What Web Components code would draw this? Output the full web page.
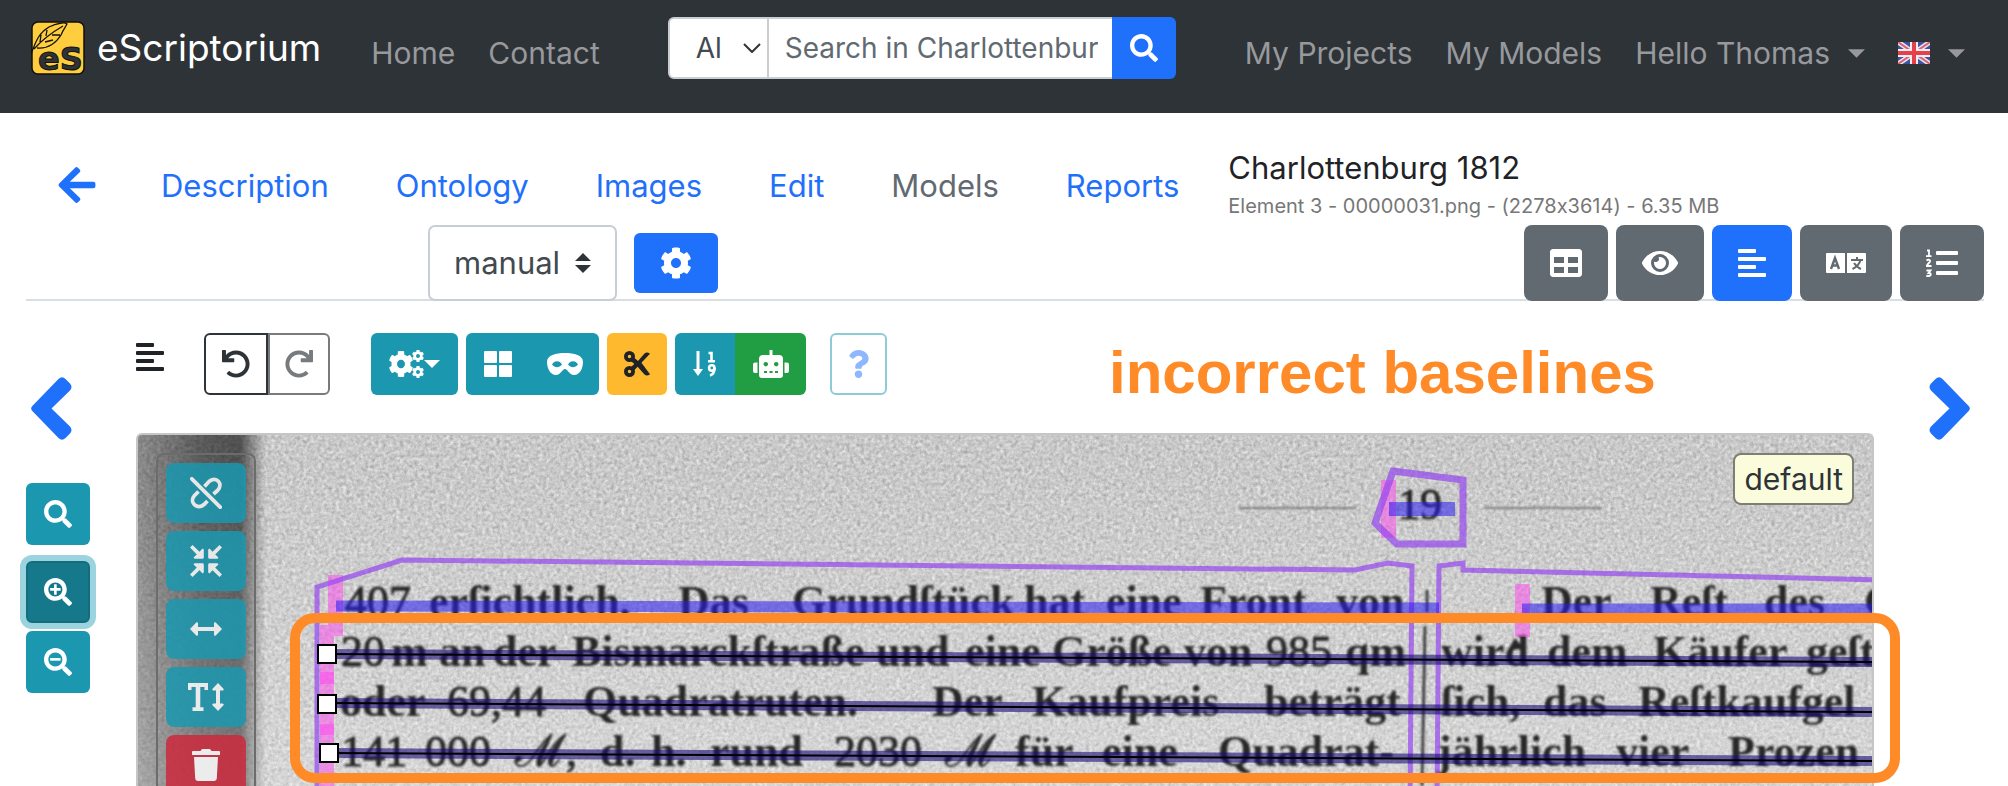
<!DOCTYPE html>
<html lang="en">
<head>
<meta charset="utf-8">
<title>eScriptorium</title>
<style>
  html, body { margin: 0; }
  body { background: #fff; color: #1f2327; font-family: Inter, "Open Sans", sans-serif; font-size: 30px; line-height: 40px; }
</style>
</head>
<body>
<escr-app></escr-app>
<script>
const ICONS = {
  search: ['0 0 512 512', '<path d="M505 442.7L405.3 343c-4.5-4.5-10.6-7-17-7H372c27.6-35.3 44-79.7 44-128C416 93.1 322.9 0 208 0S0 93.1 0 208s93.1 208 208 208c48.3 0 92.7-16.4 128-44v16.3c0 6.4 2.5 12.5 7 17l99.7 99.7c9.4 9.4 24.6 9.4 33.9 0l28.3-28.3c9.4-9.4 9.4-24.6.1-34zM208 336c-70.7 0-128-57.2-128-128 0-70.7 57.2-128 128-128 70.7 0 128 57.2 128 128 0 70.7-57.2 128-128 128z"/>'],
  left: ['0 0 41 63', '<path d="M1.300 29L27.500 2Q31 -1.500 34.500 2L39 6.500Q42 10 39 13.500L20.500 31.500L39 49.500Q42 53 39 56.500L34.500 61Q31 64.500 27.500 61L1.300 34Q-1 31.500 1.300 29z"/>'],
  back: ['0 37 448 438', '<path d="M257.5 445.1l-22.2 22.2c-9.4 9.4-24.6 9.4-33.9 0L7 273c-9.4-9.4-9.4-24.6 0-33.9L201.4 44.7c9.4-9.4 24.6-9.4 33.9 0l22.2 22.2c9.5 9.5 9.3 25-.4 34.3L136.6 216H424c13.3 0 24 10.7 24 24v32c0 13.3-10.7 24-24 24H136.6l120.5 114.8c9.8 9.3 10 24.8.4 34.3z"/>'],
  cog: ['0 0 512 512', '<path d="M487.4 315.7l-42.6-24.6c4.3-23.2 4.3-47 0-70.2l42.6-24.6c4.9-2.8 7.1-8.6 5.5-14-11.1-35.6-30-67.8-54.7-94.6-3.8-4.1-10-5.1-14.8-2.3L380.8 110c-17.9-15.4-38.5-27.3-60.8-35.1V25.8c0-5.6-3.9-10.5-9.4-11.7-36.7-8.2-74.3-7.8-109.2 0-5.5 1.2-9.4 6.1-9.4 11.7V75c-22.2 7.9-42.8 19.8-60.8 35.1L88.7 85.5c-4.9-2.8-11-1.9-14.8 2.3-24.7 26.7-43.6 58.9-54.7 94.6-1.7 5.4.6 11.2 5.5 14L67.3 221c-4.3 23.2-4.3 47 0 70.2l-42.6 24.6c-4.9 2.8-7.1 8.6-5.5 14 11.1 35.6 30 67.8 54.7 94.6 3.8 4.1 10 5.1 14.8 2.3l42.6-24.6c17.9 15.4 38.5 27.3 60.8 35.1v49.2c0 5.6 3.9 10.5 9.4 11.7 36.7 8.2 74.3 7.8 109.2 0 5.5-1.2 9.4-6.1 9.4-11.7v-49.2c22.2-7.9 42.8-19.8 60.8-35.1l42.6 24.6c4.9 2.8 11 1.9 14.8-2.3 24.7-26.7 43.6-58.9 54.7-94.6 1.5-5.5-.7-11.3-5.6-14.1zM256 336c-44.1 0-80-35.9-80-80s35.9-80 80-80 80 35.9 80 80-35.9 80-80 80z"/>'],
  undo: ['0 0 512 512', '<path d="M212.333 224.333H12c-6.627 0-12-5.373-12-12V12C0 5.373 5.373 0 12 0h48c6.627 0 12 5.373 12 12v78.112C117.773 39.279 184.26 7.47 258.175 8.007c136.906.994 246.448 111.623 246.157 248.532C504.041 393.258 393.12 504 256.333 504c-64.089 0-122.496-24.313-166.51-64.215-5.099-4.622-5.334-12.554-.467-17.42l33.967-33.967c4.474-4.474 11.662-4.717 16.401-.525C170.76 415.336 211.58 432 256.333 432c97.268 0 176-78.716 176-176 0-97.267-78.716-176-176-176-58.496 0-110.28 28.476-142.274 72.333h98.274c6.627 0 12 5.373 12 12v48c0 6.627-5.373 12-12 12z"/>'],
  table: ['0 0 512 512', '<path d="M464 32H48C21.49 32 0 53.49 0 80v352c0 26.51 21.49 48 48 48h416c26.51 0 48-21.49 48-48V80c0-26.51-21.49-48-48-48zM224 416H64v-96h160v96zm0-160H64v-96h160v96zm224 160H288v-96h160v96zm0-160H288v-96h160v96z"/>'],
  eye: ['0 0 576 512', '<path d="M572.52 241.4C518.29 135.59 410.93 64 288 64S57.68 135.64 3.48 241.41a32.35 32.35 0 0 0 0 29.19C57.71 376.41 165.07 448 288 448s230.32-71.64 284.52-177.41a32.35 32.35 0 0 0 0-29.19zM288 400a144 144 0 1 1 144-144 143.93 143.93 0 0 1-144 144zm0-240a95.31 95.31 0 0 0-25.31 3.79 47.85 47.85 0 0 1-66.9 66.9A95.78 95.78 0 1 0 288 160z"/>'],
  question: ['0 0 384 512', '<path d="M202.021 0C122.202 0 70.503 32.703 29.914 91.026c-7.363 10.58-5.093 25.086 5.178 32.874l43.138 32.709c10.373 7.865 25.132 6.026 33.253-4.148 25.049-31.381 43.63-49.449 82.757-49.449 30.764 0 68.816 19.799 68.816 49.631 0 22.552-18.617 34.134-48.993 51.164-35.423 19.86-82.299 44.576-82.299 106.405V320c0 13.255 10.745 24 24 24h72.471c13.255 0 24-10.745 24-24v-5.773c0-42.86 125.268-44.645 125.268-160.627C377.504 66.256 286.902 0 202.021 0zM192 373.459c-38.196 0-69.271 31.075-69.271 69.271 0 38.195 31.075 69.27 69.271 69.27s69.271-31.075 69.271-69.271-31.075-69.27-69.271-69.27z"/>'],
  align: ['0 0 28 28', '<rect width="18" height="4" rx="1"/><rect y="8" width="28" height="4" rx="1"/><rect y="16" width="18" height="4" rx="1"/><rect y="24" width="28" height="4" rx="1"/>'],
  language: ['0 0 40 20', '<path d="M1 0h18v20H1a1 1 0 0 1-1-1V1a1 1 0 0 1 1-1zM21 0h18a1 1 0 0 1 1 1v18a1 1 0 0 1-1 1H21z"/><g fill="none" stroke="#626a71" stroke-width="2.4"><path d="M5 16l4-11 4 11M6.500 12.500h5"/><path d="M25 7h12M31 4v3M34.500 7c-1 4-4 7-8 9M28 10c2 3 4 5 7 6" stroke-width="2"/></g>'],
  ol: ['0 0 32 28', '<rect x="10" y="2" width="22" height="4" rx="1"/><rect x="10" y="12" width="22" height="4" rx="1"/><rect x="10" y="22" width="22" height="4" rx="1"/><g fill="none" stroke="currentColor" stroke-width="1.800"><path d="M1 1.500h2V7M0 7.200h5.500"/><path d="M.5 11.500c2-1.500 4-.5 3.500 1C3.500 14 1 15 .8 17H5.500"/><path d="M.5 21.500h4L2.500 24c3 0 3 3 0 3C1.500 27 1 27 .3 26.500"/></g>'],
  grid: ['0 0 28 26', '<rect width="13" height="12" rx="1"/><rect x="15" width="13" height="12" rx="1"/><rect y="14" width="13" height="12" rx="1"/><rect x="15" y="14" width="13" height="12" rx="1"/>'],
  mask: ['0 0 36 22', '<path fill-rule="evenodd" d="M18 0C27 0 36 2 36 9C36 15 33 22 27 22C22 22 21 16 18 16S14 22 9 22C3 22 0 15 0 9C0 2 9 0 18 0zM5 11.500C7 7 13 7 15 11.500C12 15 8 15 5 11.500zM21 11.500C23 7 29 7 31 11.500C28 15 24 15 21 11.500z"/>'],
  cut: ['0 0 26 26', '<g fill="none" stroke="currentColor" stroke-width="3.800"><circle cx="5.500" cy="5.500" r="3.600"/><circle cx="5.500" cy="20.500" r="3.600"/></g><path d="M7 10l3-3.500L14 10L20.500 2.500Q23 .4 26 2.700L10 19.500l-3-3.500L10.300 13z"/><path d="M12.500 14.500L16.500 10.500L26 23.300Q23 25.600 20.500 23.500z"/>'],
  sort: ['0 0 24 26', '<path d="M3.500 0h3v18H10L5 25L0 18h3.500z"/><g fill="none" stroke="currentColor" stroke-width="2.600"><path d="M15.500 2h3v8M15 10.300h7"/><circle cx="18.800" cy="17" r="2.700"/><path d="M21.500 17c0 4-1 6.500-4.500 7.500"/></g>'],
  robot: ['0 0 36 28', '<path fill-rule="evenodd" d="M16.500 0h3v5H26a4 4 0 0 1 4 4V25a3 3 0 0 1-3 3H9a3 3 0 0 1-3-3V9a4 4 0 0 1 4-4h6.500zM12.800 12a2.200 2.200 0 1 0 .01 0zM23.200 12a2.200 2.200 0 1 0 .01 0zM11 21v2h3v-2zm5.500 0v2h3v-2zm5.500 0v2h3v-2zM4.500 12.500v10.500H2a2 2 0 0 1-2-2V14.500a2 2 0 0 1 2-2zM31.500 12.500H34a2 2 0 0 1 2 2V21a2 2 0 0 1-2 2h-2.500z"/>'],
  unlink: ['0 0 32 32', '<g fill="none" stroke="currentColor" stroke-width="3.800"><path d="M14.500 9.500L19 4.500C26 -1.500 34 7 27.500 13.500L23.500 17"/><path d="M17.500 24L14 27.500C7 33.500 -1.500 25 4.500 18.500L8.500 14.500"/><path d="M1.800 1.800L30.200 30.200" stroke-linecap="round"/></g>'],
  compress: ['0 0 32 32', '<g id="q"><path d="M13.800 4.500V12.500a1.300 1.300 0 0 1-1.300 1.300H4.500L3.500 12.500L6.800 9.500L0 2.500L2.500 0L9.500 6.800L12.500 3.500z"/></g><use href="#q" transform="rotate(90 16 16)"/><use href="#q" transform="rotate(180 16 16)"/><use href="#q" transform="rotate(270 16 16)"/>'],
  arrows: ['0 0 32 14', '<path d="M0 7L6.500 .3Q8 -.3 8 1.500V5H24V1.500Q24 -.3 25.500 .3L32 7L25.500 13.700Q24 14.300 24 12.500V9H8V12.500Q8 14.300 6.500 13.700z"/>'],
  height: ['0 0 36 28', '<path d="M0 0H20V7H16.500V4H12.300V24.300H15.500V28H4.500V24.300H7.700V4H3.500V7H0z"/><path d="M30 0L35.700 6Q36 7.500 34.500 7.500H32V20.500H34.500Q36 20.500 35.700 22L30 28L24.300 22Q24 20.500 25.500 20.500H28V7.500H25.500Q24 7.500 24.300 6z"/>'],
  trash: ['0 0 28 32', '<path d="M1 2H8.500L10 0h8l1.500 2H27a1 1 0 0 1 1 1V6H0V3A1 1 0 0 1 1 2zM2 8H26L24.800 29.500A2.600 2.600 0 0 1 22.200 32H5.800A2.600 2.600 0 0 1 3.200 29.500z"/>'],
  caret: ['0 0 16 8', '<path d="M0 0H16L8 8z"/>'],
  flag: ['0 0 32 22', '<path fill="#3f549f" d="M0 0H32V22H0z"/><path stroke="#e6e6f2" stroke-width="5" d="M0 0L32 22M32 0L0 22"/><path stroke="#e0606c" stroke-width="2" d="M0 0L32 22M32 0L0 22"/><path stroke="#f6edf2" stroke-width="8" d="M16 0V22M0 11H32"/><path stroke="#e5414d" stroke-width="4" d="M16 0V22M0 11H32"/>'],
  logo: ['0 0 54 54', '<rect x="1" y="1" width="52" height="52" rx="6" fill="#fece3e" stroke="#14110c" stroke-width="1.500"/><path d="M0 33C4 24 6 13 18 6C26 2 34 1 36 3C34 7 32 9 30 14C25 22 17 28 6 27M3 28C10 20 20 12 32 5M9 21l1-7M15 15l1-6M14 21l8-2M21 14l8 0" fill="none" stroke="#14110c" stroke-width="1.300"/><text x="7" y="49" font-family="DejaVu Sans" font-weight="bold" font-size="32" fill="#2e3338" stroke="#14110c" stroke-width="1">eS</text>']
};
ICONS.zoomin = [ICONS.search[0], ICONS.search[1] + '<path d="M184 112h48v72h72v48h-72v72h-48v-72h-72v-48h72z"/>'];
ICONS.zoomout = [ICONS.search[0], ICONS.search[1] + '<path d="M112 184h192v48H112z"/>'];
ICONS.right = [ICONS.left[0], `<g transform="translate(41 0) scale(-1 1)">${ICONS.left[1]}</g>`];
ICONS.redo = [ICONS.undo[0], `<g transform="translate(512 0) scale(-1 1)">${ICONS.undo[1]}</g>`];
ICONS.cogs = ['0 0 35 28', `<svg y="1" width="24" height="26" viewBox="14 10 484 492" preserveAspectRatio="none">${ICONS.cog[1]}</svg><svg x="23" width="12" height="12" viewBox="14 10 484 492">${ICONS.cog[1]}</svg><svg x="23" y="16" width="12" height="12" viewBox="14 10 484 492">${ICONS.cog[1]}</svg>`];

const define = (name, css, html) => customElements.define(name, class extends HTMLElement {
  constructor() {
    super();
    this.attachShadow({ mode: 'open' }).innerHTML = `<style>*{box-sizing:border-box}${css}</style>${html}`;
  }
});

/* Icon: <escr-icon name w h> */
customElements.define('escr-icon', class extends HTMLElement {
  connectedCallback() {
    if (this.shadowRoot) return;
    const [box, body] = ICONS[this.getAttribute('name')];
    this.attachShadow({ mode: 'open' }).innerHTML =
      `<style>:host{display:inline-flex;flex:none}svg{display:block;fill:currentColor}</style>
       <svg aria-hidden="true" width="${this.getAttribute('w')}" height="${this.getAttribute('h')}" viewBox="${box}">${body}</svg>`;
  }
});

/* Button with an icon in its slot; sizes and colours arrive as custom properties. */
customElements.define('escr-button', class extends HTMLElement {
  connectedCallback() {
    if (this.shadowRoot) return;
    this.attachShadow({ mode: 'open' }).innerHTML = `<style>
      :host{display:block;flex:none}
      button{box-sizing:border-box;display:flex;align-items:center;justify-content:center;margin:0;padding:0;font:inherit;
        width:var(--w,64px);height:var(--h,62px);background:var(--bg,#1b98af);color:var(--fg,#fff);
        border:var(--bd,0);border-radius:var(--r,6px);box-shadow:var(--sh,none)}
      </style><button type="button" aria-label="${this.getAttribute('label')}"><slot></slot></button>`;
  }
});

define('escr-navbar', `
  :host{display:block;background:#2e3338;color:#97999c}
  nav{display:flex;align-items:center;padding:17px 43px 34px 31px}
  a{color:inherit;text-decoration:none}
  .brand{display:flex;align-items:center;gap:12px;color:#fff;font-size:37px;line-height:54px}
  .links{display:flex;gap:33px;padding-top:10px;white-space:nowrap}
  .main{margin-left:50px}
  .user{margin-left:auto}
  .menu{display:flex;align-items:center;gap:18px}
  form{display:flex;margin-left:68px;height:62px}
  select{appearance:none;width:101px;padding:0 0 0 26px;border:2px solid #c8ced4;border-radius:6px 0 0 6px;color:#42494f;font:inherit;font-size:28px;
    background:#fff url("data:image/svg+xml,%3Csvg xmlns='http://www.w3.org/2000/svg' width='18' height='10'%3E%3Cpath d='M1 1l8 8 8-8' fill='none' stroke='%23333' stroke-width='2'/%3E%3C/svg%3E") no-repeat right 6px center}
  input{width:345px;margin-left:-2px;padding:0 14px 0 16px;border:2px solid #c8ced4;border-right:0;border-radius:0;font:inherit;font-size:28px;background:#fff;color:#42494f}
  input::placeholder{color:#626a71;opacity:1}
`, `<nav>
  <a class="brand" href="#"><escr-icon name="logo" w="54" h="54"></escr-icon>eScriptorium</a>
  <div class="links main"><a href="#">Home</a><a href="#">Contact</a></div>
  <form><select aria-label="Scope"><option>Al</option></select><input type="text" aria-label="Search" placeholder="Search in Charlottenburg"><escr-button label="Search" style="--bg:#1f70fb;--r:0 6px 6px 0"><escr-icon name="search" w="28" h="28"></escr-icon></escr-button></form>
  <div class="links user"><a href="#">My Projects</a><a href="#">My Models</a><a class="menu" href="#">Hello Thomas <escr-icon name="caret" w="17" h="9"></escr-icon></a><a class="menu" href="#" aria-label="Language"><escr-icon name="flag" w="32" h="22"></escr-icon><escr-icon name="caret" w="17" h="9"></escr-icon></a></div>
</nav>`);

define('escr-header', `
  :host{display:block}
  .tabs{display:flex;align-items:center;height:112px;padding:34px 0 0 58px;white-space:nowrap}
  a{color:#1f70fb;text-decoration:none}
  .back{display:flex;margin-bottom:2px}
  nav{display:flex;gap:67px;margin:0 49px 0 65px;font-size:31px}
  .off{color:#626a71}
  h1{margin:0;font-size:31px;font-weight:400;line-height:40px}
  small{display:block;color:#777;font-size:20px;line-height:36px;font-feature-settings:"calt" 0}
  .bar{display:flex;align-items:center;gap:17px;height:76px;margin:0 24px 0 26px;padding-left:402px;box-shadow:inset 0 -2px #d9dee3}
  select{appearance:none;width:189px;height:76px;padding:0 0 0 24px;border:2px solid #c8ced4;border-radius:7px;color:#42494f;font:inherit;font-size:31px;
    background:#fff url("data:image/svg+xml,%3Csvg xmlns='http://www.w3.org/2000/svg' width='16' height='20'%3E%3Cpath d='M0 8L8 0l8 8zM0 12h16l-8 8z' fill='%232e3338'/%3E%3C/svg%3E") no-repeat right 24px center}
  .views{display:flex;gap:8px;margin-left:auto}
  .views escr-button{--bg:#626a71;--h:76px;--w:84px;--r:8px}
`, `<div class="tabs">
  <a class="back" href="#" aria-label="Back"><escr-icon name="back" w="38" h="36"></escr-icon></a>
  <nav><a href="#">Description</a><a href="#">Ontology</a><a href="#">Images</a><a href="#">Edit</a><a class="off" href="#">Models</a><a href="#">Reports</a></nav>
  <div><h1>Charlottenburg 1812</h1><small>Element 3 - 00000031.png - (2278x3614) - 6.35 MB</small></div>
</div>
<div class="bar">
  <select aria-label="Transcription"><option>manual</option></select>
  <escr-button label="Settings" style="--w:84px;--h:60px;--bg:#1f70fb"><escr-icon name="cog" w="32" h="32"></escr-icon></escr-button>
  <div class="views">
    <escr-button label="Metadata"><escr-icon name="table" w="32" h="32"></escr-icon></escr-button>
    <escr-button label="Source image" style="--w:88px"><escr-icon name="eye" w="36" h="32"></escr-icon></escr-button>
    <escr-button label="Segmentation" style="--w:80px;--bg:#1f70fb"><escr-icon name="align" w="28" h="28"></escr-icon></escr-button>
    <escr-button label="Transcription" style="--w:92px"><escr-icon name="language" w="40" h="20"></escr-icon></escr-button>
    <escr-button label="Text"><escr-icon name="ol" w="32" h="28"></escr-icon></escr-button>
  </div>
</div>`);

define('escr-toolbar', `
  :host{display:flex;align-items:flex-start;height:62px;margin-bottom:38px}
  .group{display:flex;margin-left:8px}
  .panel{margin-top:10px;color:#1f2327}
  .note{margin:10px 0 0 222px;color:#ff8a28;font:bold 60px/60px "Liberation Sans",sans-serif;white-space:nowrap}
`, `<escr-icon class="panel" name="align" w="28" h="28"></escr-icon>
  <div class="group" style="margin-left:40px">
    <escr-button label="Undo" style="--bg:#fff;--fg:#2e3338;--bd:2px solid #2e3338;--r:6px 0 0 6px"><escr-icon name="undo" w="28" h="28"></escr-icon></escr-button>
    <escr-button label="Redo" style="--w:62px;--bg:#fff;--fg:#777b7e;--bd:2px solid #777b7e;--r:0 6px 6px 0"><escr-icon name="redo" w="28" h="28"></escr-icon></escr-button>
  </div>
  <div class="group" style="margin-left:41px"><escr-button label="Actions" style="--w:87px"><escr-icon name="cogs" w="35" h="28"></escr-icon><escr-icon name="caret" w="16" h="8"></escr-icon></escr-button></div>
  <div class="group">
    <escr-button label="Toggle regions" style="--w:64px;--r:6px 0 0 6px"><escr-icon name="grid" w="28" h="26"></escr-icon></escr-button>
    <escr-button label="Toggle masks" style="--w:69px;--r:0 6px 6px 0"><escr-icon name="mask" w="36" h="22"></escr-icon></escr-button>
  </div>
  <div class="group"><escr-button label="Cut" style="--w:60px;--bg:#ffb92e;--fg:#1f2327"><escr-icon name="cut" w="26" h="26"></escr-icon></escr-button></div>
  <div class="group">
    <escr-button label="Reorder lines" style="--w:60px;--r:6px 0 0 6px"><escr-icon name="sort" w="24" h="26"></escr-icon></escr-button>
    <escr-button label="Automatic ordering" style="--w:71px;--bg:#219d43;--r:0 6px 6px 0"><escr-icon name="robot" w="36" h="28"></escr-icon></escr-button>
  </div>
  <div class="group" style="margin-left:24px"><escr-button label="Help" style="--w:57px;--bg:#fff;--fg:#8eb7fe;--bd:2px solid #8dcbd7"><escr-icon name="question" w="21" h="28"></escr-icon></escr-button></div>
  <div class="note">incorrect baselines</div>`);

/* Words of the scanned page: x, then text, on each baseline. */
const LINES = [
  [616, [345,'407'],[429,'erſichtlich.'],[678,'Das'],[792,'Grundſtück'],[1024,'hat'],[1106,'eine'],[1200,'Front'],[1336,'von'],[1541,'Der'],[1650,'Reſt'],[1764,'des'],[1864,'G']],
  [666, [341,'20'],[391,'m'],[439,'an'],[493,'der'],[572,'Bismarckſtraße'],[876,'und'],[965,'eine'],[1052,'Größe'],[1184,'von'],[1266,'985'],[1345,'qm'],[1441,'wird'],[1547,'dem'],[1653,'Käufer'],[1806,'geſt']],
  [716, [340,'oder'],[447,'69,44'],[583,'Quadratruten.'],[932,'Der'],[1032,'Kaufpreis'],[1264,'beträgt'],[1441,'ſich,'],[1543,'das'],[1638,'Reſtkaufgel']],
  [766, [341,'141'],[425,'000'],[515,'ℳ,'],[600,'d.'],[651,'h.'],[710,'rund'],[834,'2030'],[945,'ℳ'],[1015,'für'],[1102,'eine'],[1218,'Quadrat-'],[1437,'jährlich'],[1616,'vier'],[1728,'Prozen']]
];
const words = LINES.map(([y, ...ws]) => ws.map(([x, t]) =>
  `<text x="${x}" y="${y}"${/^[\dℳ]/.test(t) ? ' class="n"' : ''}>${t}</text>`).join('')).join('');

define('escr-scan', `
  :host{display:block;position:relative;flex:1;min-height:353px}
  .frame{position:absolute;inset:0;overflow:hidden;border:2px solid #c6c6c6;border-bottom:0;border-radius:6px 6px 0 0;background:#c8c8c8}
  .page{display:block;position:absolute;top:-2px;left:-2px;width:calc(100% + 4px);height:calc(100% + 2px)}
  .n{font-weight:400;stroke:#161616;stroke-width:1px}
  .tools{position:absolute;top:18px;left:18px;display:flex;flex-direction:column;gap:8px;width:100px;height:500px;padding:8px;border:2px solid #6c6c6c;border-radius:8px}
  .tools escr-button{--w:80px;--h:60px;--r:8px;opacity:.85}
  .label{position:absolute;top:18px;right:18px;padding:10px 9px;border:2px solid #7d7e74;border-radius:8px;background:#fbfcdc;color:#2e3338;font-size:30px;line-height:28px}
  .mark{position:absolute;top:180px;left:154px;right:-26px;height:170px;border:10px solid #ff8a28;border-radius:25px}
`, `<div class="frame">
  <svg class="page">
    <defs>
      <filter id="grain" x="0" y="0" width="100%" height="100%" color-interpolation-filters="sRGB">
        <feTurbulence type="fractalNoise" baseFrequency=".28" numOctaves="4" seed="4"/>
        <feColorMatrix values=".25 .2 0 0 .56 .25 .2 0 0 .56 .25 .2 0 0 .56 0 0 0 0 1"/>
      </filter>
      <filter id="soft"><feGaussianBlur stdDeviation=".9"/></filter>
      <linearGradient id="edge" gradientUnits="userSpaceOnUse" x1="0" x2="130" y1="0" y2="0">
        <stop offset="0" stop-opacity=".3"/><stop offset=".25" stop-opacity=".42"/><stop offset=".5" stop-opacity=".55"/><stop offset=".8" stop-opacity=".6"/><stop offset="1" stop-opacity="0"/>
      </linearGradient>
      <linearGradient id="fade" x1="0" x2="0" y1="0" y2="1"><stop offset=".1" stop-color="#fff" stop-opacity="0"/><stop offset="1" stop-color="#fff" stop-opacity=".25"/></linearGradient>
    </defs>
    <rect width="100%" height="100%" filter="url(#grain)"/>
    <rect width="130" height="100%" fill="url(#edge)"/>
    <rect width="100%" height="100%" fill="url(#fade)"/>
    <g transform="translate(-136 -433)">
      <g filter="url(#soft)" fill="#161616" font-family="Liberation Serif" font-weight="bold" font-size="44" opacity=".9">
        ${words}<text class="n" x="1398" y="519">19</text>
        <path d="M1239 508H1355M1484 508H1602" stroke="#777" stroke-width="2"/>
        <path d="M1427 590V612M1425 626L1422 786" stroke="#333" stroke-width="3"/>
        <path d="M1508 650L1515 638L1524 649z"/>
      </g>
      <g fill="#ff46f0" fill-opacity=".5">
        <path d="M1381 480h15v58h-15zM328 575h15v61h-15zM1515 584h15v53h-15zM320 625h14v161h-14z"/><path d="M320 672h14v12h-14zM320 724h14v11h-14z"/>
      </g>
      <g fill="none" stroke="#9646f0" stroke-opacity=".7" stroke-width="5">
        <path d="M317 800V587L402 560L1355 570L1388 563L1412 566L1410 800"/>
        <path d="M1437 800L1439 566L1463 563V570L1880 580"/>
        <path stroke-width="7" d="M1393 471L1463 480V544H1397L1375 523z"/>
      </g>
      <g stroke="#2819f0" stroke-opacity=".55" fill="none">
        <path stroke-width="14" d="M1389 509H1455"/>
        <path stroke-width="11" d="M336 606L1439 608M1522 609H1880"/>
      </g>
      <g fill="none"><g stroke="#190c78" stroke-opacity=".6" stroke-width="10"><path d="M326 654L1880 662M326 703L1880 712M328 753L1880 761"/></g>
      <g stroke="#000" stroke-width="2"><path d="M326 654L1880 662M326 703L1880 712M328 753L1880 761"/></g></g>
      <path fill="#fff" stroke="#000" stroke-width="2" d="M318 645h18v18h-18zM318 695h18v18h-18zM320 744h18v18h-18z"/>
    </g>
  </svg>
  <div class="tools">
    <escr-button label="Unlink lines"><escr-icon name="unlink" w="32" h="32"></escr-icon></escr-button>
    <escr-button label="Join lines"><escr-icon name="compress" w="32" h="32"></escr-icon></escr-button>
    <escr-button label="Reverse lines"><escr-icon name="arrows" w="32" h="14"></escr-icon></escr-button>
    <escr-button label="Line type"><escr-icon name="height" w="36" h="28"></escr-icon></escr-button>
    <escr-button label="Delete" style="--bg:#cd2a3e"><escr-icon name="trash" w="28" h="32"></escr-icon></escr-button>
  </div>
  <div class="label">default</div>
</div><div class="mark"></div>`);

define('escr-app', `
  :host{display:flex;flex-direction:column;height:100vh;overflow:hidden}
  main{flex:1;display:grid;grid-template-columns:64px 1fr 88px;column-gap:46px;padding-left:26px}
  .side{padding-top:76px}
  .prev,.next{display:block;height:106px;color:#1f70fb}
  .prev{padding-left:5px}
  .next{padding-left:9px}
  .zoom{display:flex;flex-direction:column;gap:8px}
  .zoom .on{--bg:#16798b;--bd:2px solid #146c7c;--sh:0 0 0 6px #9bd4de;margin-top:8px}
  .center{display:flex;flex-direction:column;min-width:0;padding-top:32px}
`, `<escr-navbar></escr-navbar><escr-header></escr-header>
<main>
  <div class="side">
    <a class="prev" href="#" aria-label="Previous image"><escr-icon name="left" w="41" h="63"></escr-icon></a>
    <div class="zoom">
      <escr-button label="Reset zoom"><escr-icon name="search" w="28" h="28"></escr-icon></escr-button>
      <escr-button class="on" label="Zoom in"><escr-icon name="zoomin" w="28" h="28"></escr-icon></escr-button>
      <escr-button label="Zoom out"><escr-icon name="zoomout" w="28" h="28"></escr-icon></escr-button>
    </div>
  </div>
  <div class="center"><escr-toolbar></escr-toolbar><escr-scan></escr-scan></div>
  <div class="side"><a class="next" href="#" aria-label="Next image"><escr-icon name="right" w="41" h="63"></escr-icon></a></div>
</main>`);
</script>
</body>
</html>
